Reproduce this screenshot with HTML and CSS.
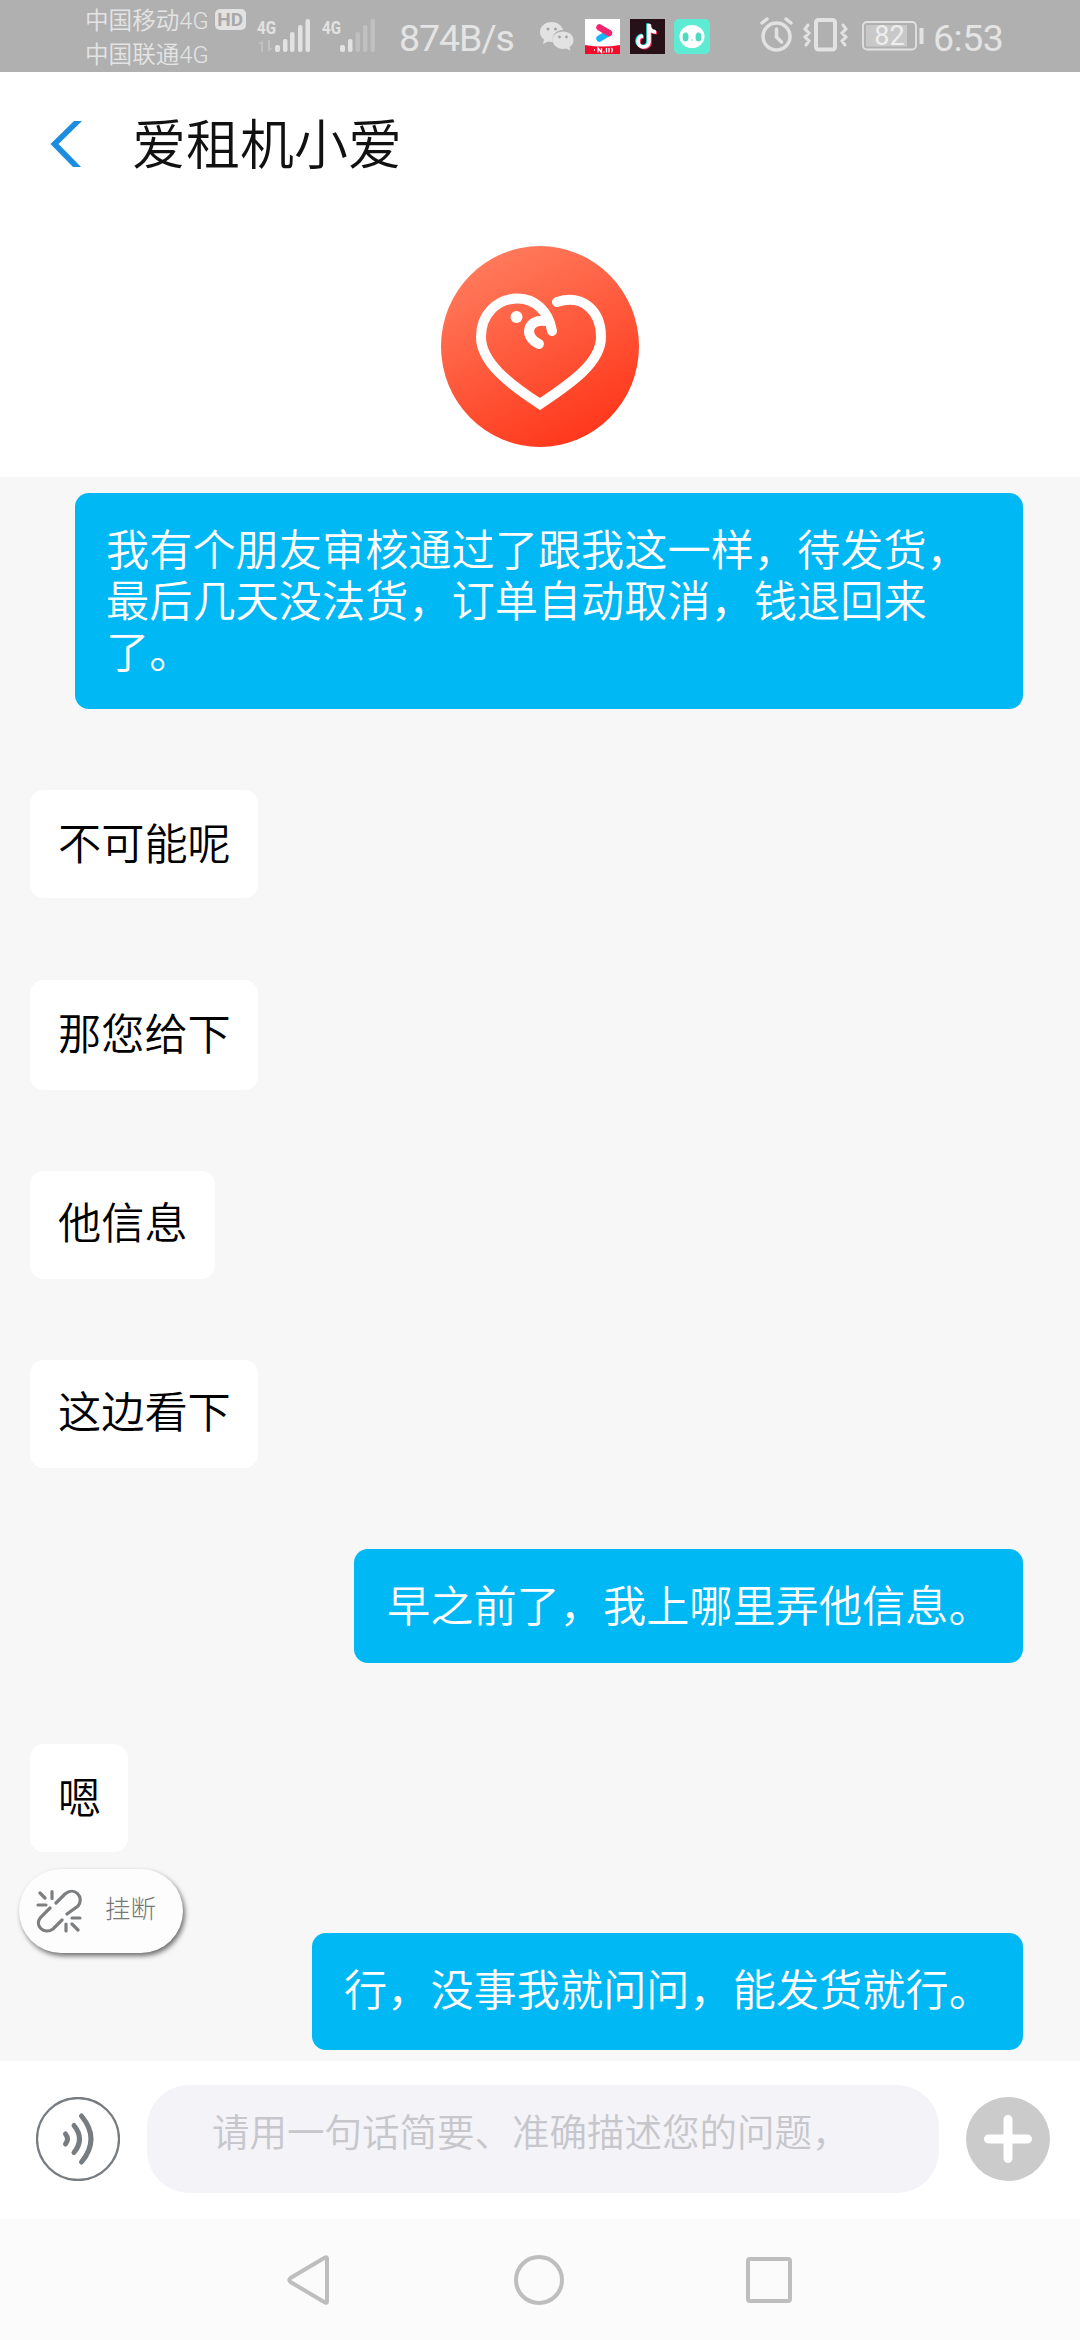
FILE: index.html
```html
<!DOCTYPE html>
<html lang="zh-CN">
<head>
<meta charset="utf-8">
<title>爱租机小爱</title>
<link rel="stylesheet" href="styles.css">
</head>
<body>
<div class="screen">
  <div class="status">
    <div class="carriers">
      <div class="carrier">中国移动4G<span class="hd">HD</span></div>
      <div class="carrier">中国联通4G</div>
    </div>
    <svg class="signals" width="120" height="72" viewBox="0 0 120 72">
      <g fill="#e2e2e2">
        <text class="net" x="0" y="33.5" textLength="19" lengthAdjust="spacingAndGlyphs">4G</text>
        <text class="net" x="65" y="33.5" textLength="19" lengthAdjust="spacingAndGlyphs">4G</text>
        <path opacity=".35" d="M1 44l5-4v12h-2v-8zM11 40h2v8h3l-5 4z"/>
        <rect x="18" y="45" width="5" height="7" rx="2"/><rect x="26" y="39" width="4.5" height="13" rx="2"/><rect x="33" y="32" width="4.5" height="20" rx="2"/><rect x="41" y="25" width="4.500" height="27" rx="2"/><rect x="48.500" y="19" width="4.500" height="33" rx="2"/>
        <rect x="83" y="45" width="5" height="7" rx="2"/><rect x="91" y="39" width="4.500" height="13" rx="2"/>
        <g opacity=".32"><rect x="98.500" y="32" width="4.500" height="20" rx="2"/><rect x="106" y="25" width="4.500" height="27" rx="2"/><rect x="113.500" y="19" width="4.500" height="33" rx="2"/></g>
      </g>
    </svg>
    <div class="speed">874B/s</div>
    <svg class="apps" width="170" height="36" viewBox="0 0 170 36">
      <g fill="#e2e2e2">
        <path d="M11.500 4C5 4 0 8.500 0 14c0 3 1.500 5.500 4 7.500L3 26l5-2.500c2 .5 3.500.5 5 .5C11 17 17 11.500 23 12 22 7.500 17 4 11.500 4z"/>
        <path d="M23 13.500c-6 0-10.500 4-10.500 8.500S17 31 23 31l3-.5 4.500 2-1-3.500c2.500-1.500 4-4 4-7 0-4.500-4.500-8.500-10.500-8.500z"/>
      </g>
      <g fill="#a4a4a4"><circle cx="8" cy="11" r="1.500"/><circle cx="15.500" cy="11" r="1.500"/><circle cx="19.500" cy="19" r="1.400"/><circle cx="26.500" cy="19" r="1.400"/></g>
      <rect x="45" y="1" width="35" height="35" fill="#fff"/>
      <path d="M45 27q17.500 3 35 0v9H45z" fill="#f20c2c"/>
      <path d="M59.500 20.500l9-5.500" stroke="#18b3f5" stroke-width="6.500" stroke-linecap="round"/>
      <path d="M59.500 9.500l9.500 5.500" stroke="#f5236f" stroke-width="6.500" stroke-linecap="round"/>
      <path d="M54 32h1M58 34.500v-4.500l3.500 4.500v-4.500M64 33.500v1M66.500 34.500v-4.500M69 30v4.500M71.500 30q1.500 2 0 4.500" stroke="#fff" stroke-width="1.300" fill="none"/>
      <rect x="90" y="1" width="35" height="35" fill="#271018"/>
      <g fill="none" stroke-width="3.600">
        <path d="M109 6v18a5.500 5.500 0 1 1-6-6M109 8q1 6 7 6" stroke="#26e8e4" transform="translate(-1 -.7)"/>
        <path d="M109 6v18a5.500 5.500 0 1 1-6-6M109 8q1 6 7 6" stroke="#f8325f" transform="translate(1 .8)"/>
        <path d="M109 6v18a5.500 5.500 0 1 1-6-6M109 8q1 6 7 6" stroke="#fff"/>
      </g>
      <rect x="134" y="1" width="36" height="35" rx="5" fill="#5eebd3"/>
      <ellipse cx="152" cy="18.500" rx="12.500" ry="11.500" fill="#fff"/>
      <g fill="#4fd9c0"><ellipse cx="145.500" cy="19" rx="3" ry="4.500"/><ellipse cx="158.500" cy="19" rx="3" ry="4.500"/><circle cx="152" cy="22" r=".8"/></g>
    </svg>
    <svg class="indicators" width="166" height="40" viewBox="0 0 166 40">
      <g fill="none" stroke="#e2e2e2" stroke-width="3.500" stroke-linecap="round">
        <circle cx="16.500" cy="20.500" r="13.500"/><path d="M16.500 13v8l5 5M2 7l5-4M26 3l5 4"/>
        <rect x="56" y="4" width="19" height="29.500" rx="2.500" stroke-width="4"/>
        <path stroke-width="3" d="M48 9l-3 4 4 4-4 4 4 4-3 4M83 9l3 4-4 4 4 4-4 4 3 4"/>
        <rect x="103" y="6" width="53" height="27.500" rx="4" stroke-width="1.800"/>
        <path d="M161.500 12v16" stroke-width="4" stroke-linecap="butt"/>
      </g>
      <rect x="106" y="9" width="41" height="21.500" fill="#c8c8c8"/>
      <text class="level" x="129.500" y="29" text-anchor="middle">82</text>
    </svg>
    <div class="clock">6:53</div>
  </div>

  <div class="head">
    <div class="titlebar">
      <svg class="back" width="34" height="48" viewBox="0 0 34 48"><path d="M24 1H32L8.500 24 31 47H23L.5 24z" fill="#1b8de0"/></svg>
      <h1 class="title">爱租机小爱</h1>
    </div>
    <svg class="logo" width="198" height="201" viewBox="0 0 198 201">
      <defs><linearGradient id="lg" x1=".25" y1="0" x2=".75" y2="1"><stop offset="0" stop-color="#ff7d5e"/><stop offset="1" stop-color="#ff3418"/></linearGradient></defs>
      <ellipse cx="99" cy="100.500" rx="99" ry="100.500" fill="url(#lg)"/>
      <g fill="none" stroke="#fff" stroke-width="10" stroke-linecap="round">
        <path d="M111 85C108 66 94 52 76 52.500C55 53 40 69 40 91C40 116 68 138 99 158C132 136 160 116 160 91C160 64 141 48 116 56"/>
        <path d="M105 75C86 72 82 91 98 98"/>
      </g>
      <circle cx="75.500" cy="71" r="6" fill="#fff"/>
    </svg>
  </div>

  <div class="chat">
    <div class="msg out wide">我有个朋友审核通过了跟我这一样，待发货，<br>最后几天没法货，订单自动取消，钱退回来<br>了。</div>
    <div class="msg in">不可能呢</div>
    <div class="msg in second">那您给下</div>
    <div class="msg in third">他信息</div>
    <div class="msg in fourth">这边看下</div>
    <div class="msg out mid">早之前了，我上哪里弄他信息。</div>
    <div class="msg in last">嗯</div>
    <div class="msg out end">行，没事我就问问，能发货就行。</div>
    <div class="hangup">
      <svg width="46" height="44" viewBox="0 0 46 44" fill="none" stroke="#7c7e80" stroke-width="3.200" stroke-linecap="round"><path d="M20 14l9-9c9-8 20 3 13 12L31 25M14 19L4.500 28.500C-2 37 8 46 17 40L26 31M4 4l5 5M16 2.500v7M2 16h8M30 35v7M36 35l6 6M36 29h8"/></svg>
      <span>挂断</span>
    </div>
  </div>

  <div class="composer">
    <svg width="84" height="84" viewBox="0 0 84 84" fill="none" stroke="#777c80" stroke-linecap="round"><circle cx="42" cy="42" r="41" stroke-width="2.300"/><path stroke-width="5" d="M29.500 37q4 5 0 10M38 28.500q11 13.500 0 27M45.500 19q19 23 0 46"/></svg>
    <div class="field">请用一句话简要、准确描述您的问题，</div>
    <svg width="84" height="84" viewBox="0 0 84 84"><circle cx="42" cy="42" r="42" fill="#cbcbcb"/><path d="M42 22.500v39M22.500 42h39" stroke="#fff" stroke-width="9" stroke-linecap="round"/></svg>
  </div>

  <div class="nav">
    <svg width="44" height="50" viewBox="0 0 44 50"><path d="M40 3.500v43q0 2-2 1L3.500 27q-2.500-2 0-4L38 2.500q2-1 2 1z"/></svg>
    <svg width="50" height="50" viewBox="0 0 50 50"><circle cx="25" cy="25" r="23"/></svg>
    <svg width="46" height="46" viewBox="0 0 46 46"><rect x="2" y="2" width="42" height="42" rx="2"/></svg>
  </div>
</div>
</body>
</html>
```
FILE: styles.css
```css
* { box-sizing: border-box; }
body { margin: 0; font-family: "Noto Sans CJK SC", sans-serif; font-weight: 350; }
svg { display: block; flex: none; }
.screen { width: 1080px; height: 2340px; display: flex; flex-direction: column; background: #fff; overflow: hidden; }

.status { height: 72px; flex: none; display: flex; align-items: center; background: #b0b0b0; color: #e4e4e4; padding-left: 85px; font-family: Roboto, "Noto Sans CJK SC", sans-serif; }
.carriers { width: 172px; font-size: 23.6px; line-height: 34px; padding-top: 3px; }
.carrier { display: flex; align-items: center; height: 34px; white-space: nowrap; }
.hd { margin: 0 0 3px 6px; width: 31px; height: 21px; border-radius: 5px; background: #e2e2e2; color: #a8a8a8; font-size: 19px; line-height: 21px; font-weight: 700; text-align: center; }
.net { font: 700 19px Roboto, sans-serif; }
.speed { width: 140px; padding-left: 22px; font-size: 37.5px; font-weight: 400; letter-spacing: -1.1px; line-height: 44px; padding-top: 3px; white-space: nowrap; }
.apps { margin-left: 23px; margin-bottom: 1px; }
.indicators { margin-left: 50px; }
.level { font: 400 27px Roboto, sans-serif; fill: #eee; }
.clock { margin-left: 7px; padding-top: 3px; font-size: 37.5px; font-weight: 400; letter-spacing: -.5px; line-height: 44px; }

.head { height: 405px; flex: none; display: flex; flex-direction: column; align-items: center; }
.titlebar { align-self: stretch; height: 174px; padding: 30px 0 0 50px; display: flex; align-items: flex-start; }
.back { margin-top: 18px; }
.title { margin: 0 0 0 48px; font-size: 54px; line-height: 80px; font-weight: 350; color: #111; }

.chat { position: relative; height: 1584px; flex: none; background: #f7f7f7; padding: 16px 57px 0 30px; display: flex; flex-direction: column; align-items: flex-start; }
.msg { flex: none; border-radius: 14px; font-size: 43.2px; line-height: 51.2px; white-space: nowrap; }
.in { height: 108px; background: #fff; color: #000; padding: 26px 27px 0 28px; margin-bottom: 82px; }
.second { height: 110px; margin-bottom: 81px; }
.third { padding-top: 24px; margin-bottom: 81px; }
.fourth { padding-top: 24px; }
.out { align-self: flex-end; background: #00b8f3; color: #fff; padding: 29px 32px 0 31px; }
.wide { width: 948px; height: 216px; margin-bottom: 81px; }
.mid { width: 669px; height: 114px; margin: -1px 0 81px; padding-left: 33px; }
.last { margin-bottom: 81px; }
.end { width: 711px; height: 117px; padding-left: 32px; }
.hangup { position: absolute; left: 19px; top: 1392px; width: 164px; height: 84px; border-radius: 42px; background: #fdfdfd; box-shadow: 2px 3px 5px rgba(0,0,0,.55); display: flex; align-items: center; padding-left: 17px; }
.hangup span { margin: -10px 0 0 23px; font-size: 25.500px; font-weight: 300; color: #777; }

.composer { height: 158px; flex: none; display: flex; align-items: flex-start; padding: 24px 30px 0 36px; justify-content: space-between; background: #fff; }
.composer svg { margin-top: 12px; }
.field { width: 792px; height: 108px; border-radius: 42px; background: #f3f3f8; color: #c6c6cb; font-size: 37.500px; line-height: 56px; padding: 17px 0 0 65px; white-space: nowrap; }

.nav { flex: 1; background: #fbfbfb; display: flex; justify-content: space-between; align-items: center; padding: 1px 288px 0 287px; }
.nav svg { fill: none; stroke: #bebebe; stroke-width: 4; }
```
